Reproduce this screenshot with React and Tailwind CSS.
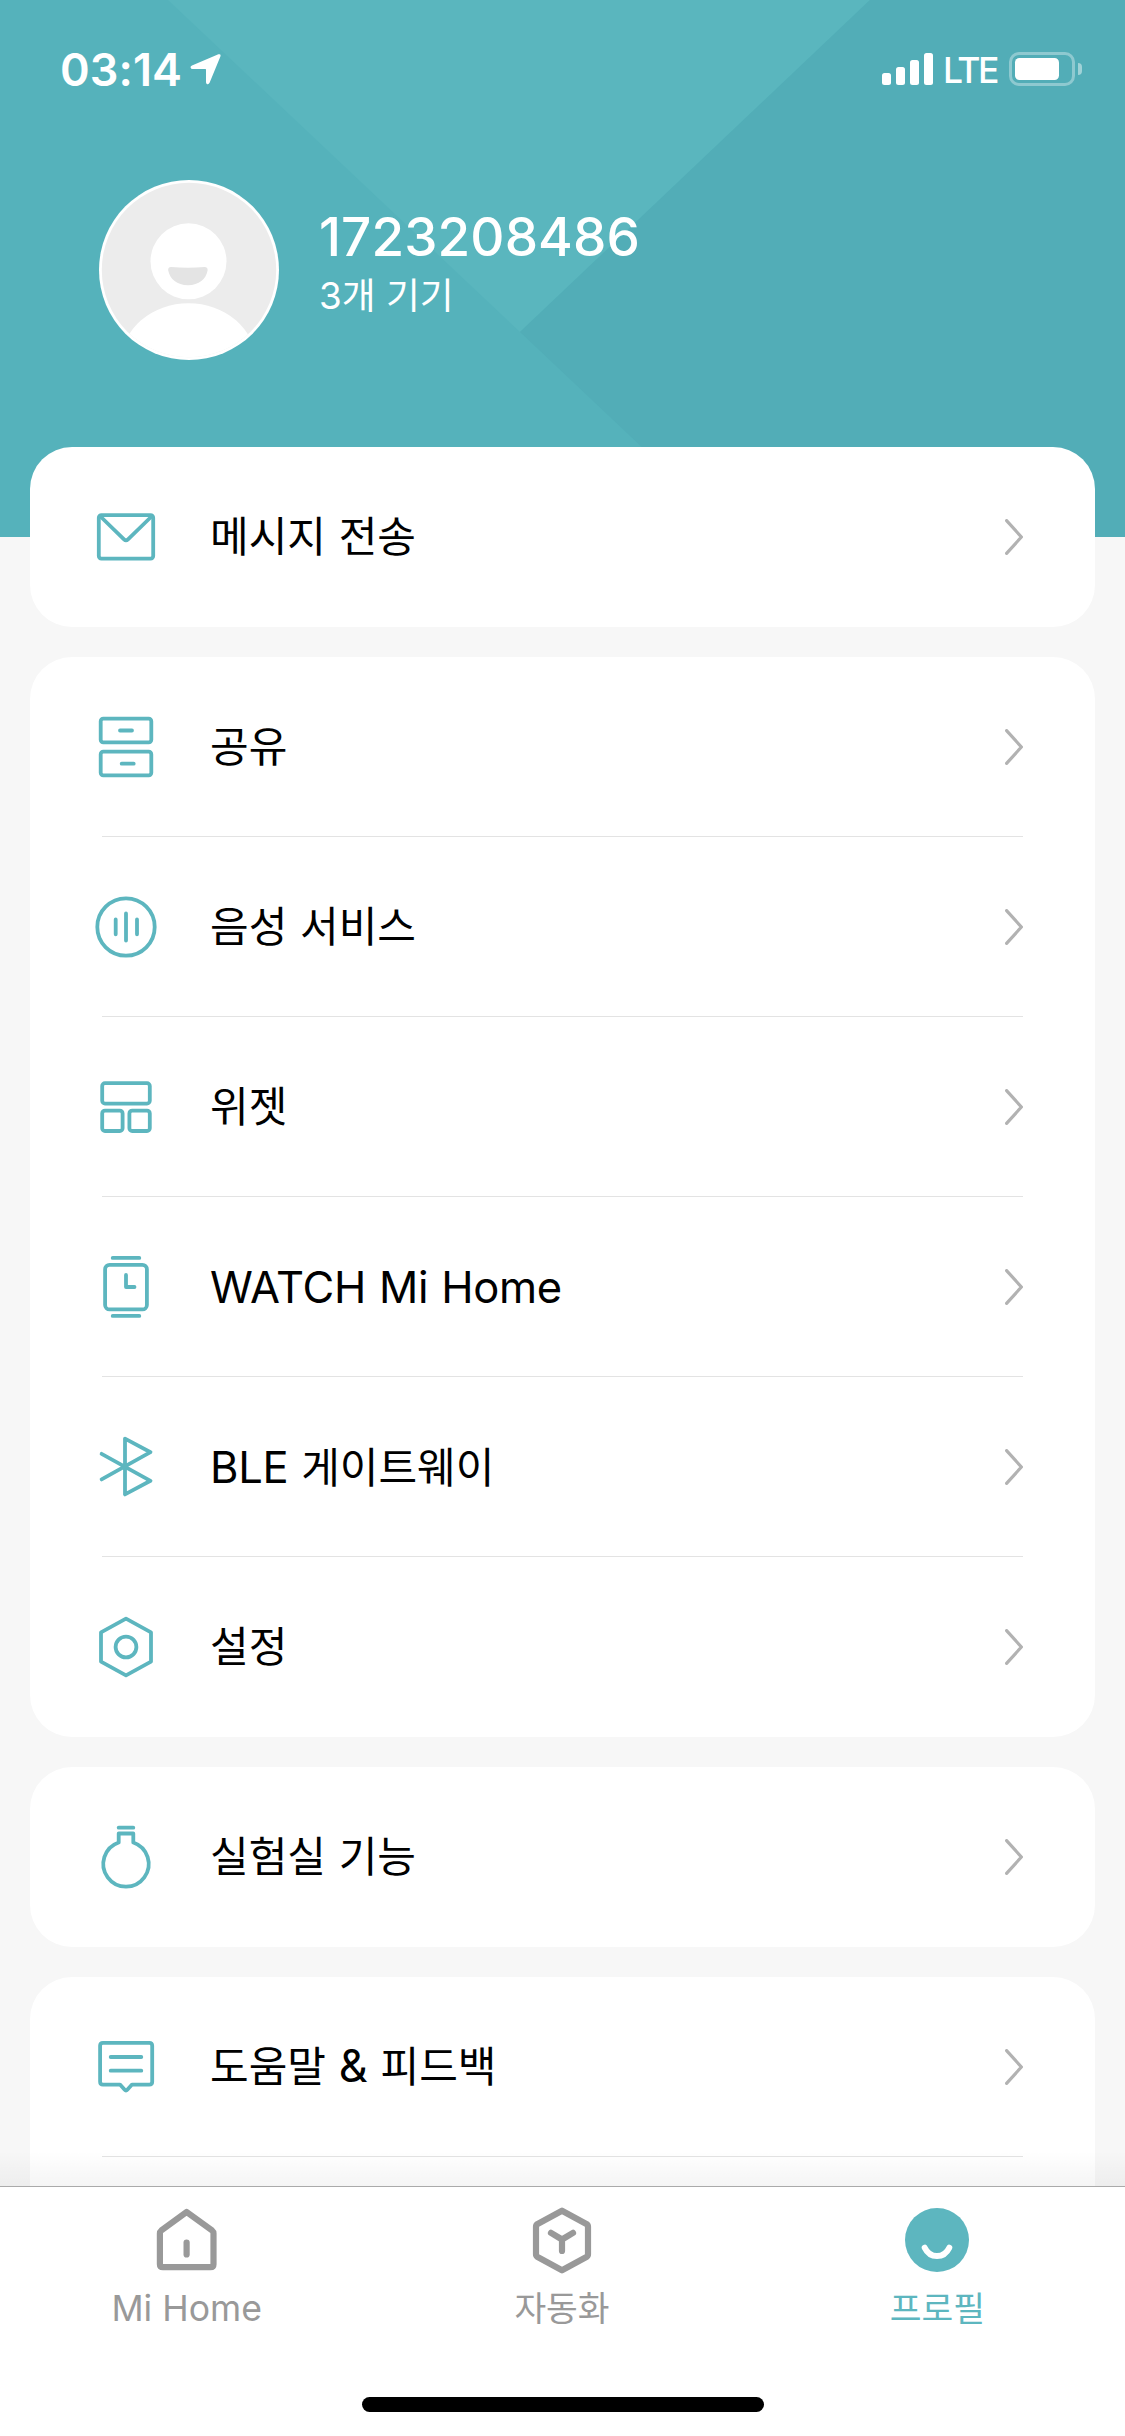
const icons = {
    mail: (
        <>
            <rect x="17.8" y="23.1" width="54.4" height="43.6" rx="2.6"/>
            <path d="M19.5 24.5L43 47.4Q45 49.3 47 47.4L70.5 24.5"/>
        </>
    ),
    share: (
        <>
            <rect x="19.7" y="16.7" width="50.6" height="23.6" rx="2.6"/>
            <rect x="19.7" y="49.7" width="50.6" height="23.6" rx="2.6"/>
            <path d="M39 28.5H51M40.7 61.7H52.7"/>
        </>
    ),
    voice: (
        <>
            <circle cx="45" cy="45" r="28.7"/>
            <path d="M34.7 37.5V52.3M45 31.5V58.5M56 37.5V52.3"/>
        </>
    ),
    widget: (
        <>
            <rect x="21.2" y="21.2" width="47.6" height="20.4" rx="2.8"/>
            <rect x="21.2" y="48.6" width="20.4" height="20.4" rx="2.8"/>
            <rect x="48.4" y="48.6" width="20.4" height="20.4" rx="2.8"/>
        </>
    ),
    watch: (
        <>
            <rect x="24.1" y="22.8" width="41.8" height="44.6" rx="4.5"/>
            <path d="M31.7 15.9H58.3M31.7 73.9H58.3M45 33V45H53.5"/>
        </>
    ),
    bluetooth: <path d="M20.6 31.8L69.5 58.8L44 72.4V16.6L69.5 30.2L20.6 57.4"/>,
    settings: (
        <>
            <path d="M45 16.7L70 30.4V59.6L45 73.3L20 59.6V30.4Z"/>
            <circle cx="45" cy="45" r="10.4"/>
        </>
    ),
    lab: (
        <>
            <path d="M37.7 15.7H52.3"/>
            <path d="M37.7 30.5V21.5H52.3V30.5A22.7 22.7 0 1 1 37.7 30.5Z"/>
        </>
    ),
    feedback: (
        <>
            <path d="M22 20.8H68.3Q71.2 20.8 71.2 23.7V59.7Q71.2 62.6 68.3 62.6H51L46.3 67.8Q45 69.3 43.7 67.8L39 62.6H22Q19.1 62.6 19.1 59.7V23.7Q19.1 20.8 22 20.8Z"/>
            <path d="M29.7 35H60.3M29.7 48.7H60.3"/>
        </>
    ),
};

const groups = [
    [{icon: 'mail', label: '메시지 전송'}],
    [
        {icon: 'share', label: '공유'},
        {icon: 'voice', label: '음성 서비스'},
        {icon: 'widget', label: '위젯'},
        {icon: 'watch', latin: 'WATCH Mi Home'},
        {icon: 'bluetooth', latin: 'BLE', label: ' 게이트웨이'},
        {icon: 'settings', label: '설정'},
    ],
    [{icon: 'lab', label: '실험실 기능'}],
];

function Row({item, divider}) {
    return (
        <div className="flex h-[180px] items-center pl-[51px] pr-[72px] relative">
            <svg
                className="size-[90px] shrink-0"
                viewBox="0 0 90 90"
                fill="none"
                stroke="#5db6bf"
                strokeWidth="3.8"
                strokeLinecap="round"
                strokeLinejoin="round"
            >
                {icons[item.icon]}
            </svg>
            <div className="ml-[39px] flex-1 whitespace-pre text-[42px] leading-[60px] text-black [word-spacing:1px]">
                {item.latin && <span className="text-[43.5px] tracking-[-0.3px]">{item.latin}</span>}
                {item.label}
            </div>
            <svg className="h-9 w-[18px]" viewBox="0 0 18 36" fill="none" stroke="#b2b2b2" strokeWidth="3.2" strokeLinecap="round" strokeLinejoin="round">
                <path d="M1.6 1.6L16.4 18L1.6 34.4"/>
            </svg>
            {divider && <div className="absolute bottom-0 left-[72px] right-[72px] h-px bg-[#e3e3e3]"/>}
        </div>
    );
}

function StatusBar() {
    return (
        <div className="flex h-[138px] items-center justify-between pl-[60px] pr-[43px] text-white">
            <div className="flex items-center">
                <span className="text-[45px] font-semibold leading-none tracking-[0.1px]">03:14</span>
                <svg className="ml-2 size-[31px]" viewBox="0 0 31 31" fill="currentColor">
                    <path d="M28.4 .3Q31.2 -.5 30.4 2.4L19.6 28.8Q18.7 30.6 17.3 30.2Q16 29.8 16 28.2V15.6Q16 15 15.4 15H2.6Q.9 15 .6 13.5Q.3 12.2 2 11.4Z"/>
                </svg>
            </div>
            <div className="flex items-center">
                <div className="flex h-8 items-end gap-[5px]">
                    <div className="h-3 w-[9px] rounded-[2.5px] bg-white"/>
                    <div className="h-[18px] w-[9px] rounded-[2.5px] bg-white"/>
                    <div className="h-[25px] w-[9px] rounded-[2.5px] bg-white"/>
                    <div className="h-8 w-[9px] rounded-[2.5px] bg-white"/>
                </div>
                <span className="ml-[10px] w-[66px] pt-[3px] text-[35.5px] font-medium leading-none tracking-[-2.4px]">LTE</span>
                <div className="h-[34px] w-[66px] rounded-[10px] border-3 border-white/35 p-[3px]">
                    <div className="h-[22px] w-11 rounded-[4.5px] bg-white"/>
                </div>
                <div className="ml-[3px] h-3 w-1 rounded-r-full bg-white/45"/>
            </div>
        </div>
    );
}

function Avatar() {
    return (
        <div className="size-[180px] overflow-hidden rounded-full bg-white">
            <svg viewBox="0 0 180 180">
                <clipPath id="face">
                    <circle cx="90" cy="90" r="87.2"/>
                </clipPath>
                <g clipPath="url(#face)">
                    <rect width="180" height="180" fill="#ececec"/>
                    <circle cx="89.5" cy="81.3" r="38" fill="#fff"/>
                    <path d="M72 87Q89 88.6 105.6 87Q109 87.2 108.6 90.5C107 99 100 105.2 89 105.2S71 99 69.2 90.5Q68.8 87 72 87Z" fill="#e4e4e4"/>
                    <ellipse cx="89.5" cy="181" rx="67" ry="57.7" fill="#fff"/>
                </g>
            </svg>
        </div>
    );
}

const tabs = [
    {
        label: 'Mi Home',
        style: 'text-[#999999] text-[35.6px]',
        icon: (
            <g fill="none" stroke="currentColor" strokeWidth="6.2" strokeLinecap="round" strokeLinejoin="round">
                <path d="M35.6 8L61.2 26.6Q62.5 27.6 62.5 29.5V60.2Q62.5 63.2 59.5 63.2H11.9Q8.9 63.2 8.9 60.2V29.5Q8.9 27.6 10.2 26.6Z"/>
                <path d="M35.6 38.7V50.5"/>
            </g>
        ),
    },
    {
        label: '자동화',
        style: 'text-[#999999] text-[34.5px]',
        icon: (
            <g fill="none" stroke="currentColor" strokeWidth="6.2" strokeLinecap="round" strokeLinejoin="round">
                <path d="M36 6.7L60.4 20Q62 21 62 22.8V50.2Q62 52 60.4 53L36 66.3L11.6 53Q10 52 10 50.2V22.8Q10 21 11.6 20Z"/>
                <path d="M25 28.8L36 35.5L47 28.8M36 35.5V47"/>
            </g>
        ),
    },
    {
        label: '프로필',
        style: 'text-[#5db6bf] text-[34.5px]',
        icon: (
            <>
                <circle cx="36" cy="36" r="32" fill="currentColor"/>
                <path d="M23.7 43.7C29 54.8 43 54.8 48.3 43.7" fill="none" stroke="#fff" strokeWidth="6" strokeLinecap="round"/>
            </>
        ),
    },
];

function TabBar() {
    return (
        <div className="relative flex h-[250px] shrink-0 flex-col border-t border-[#aaaaaa] bg-white">
            <div className="absolute inset-x-0 -top-9 h-[35px] bg-linear-to-t from-black/4 to-transparent"/>
            <div className="-ml-px grid grid-cols-3 pt-[17px]">
                {tabs.map(tab => (
                    <div key={tab.label} className={`flex flex-col items-center ${tab.style}`}>
                        <svg className="size-[72px]" viewBox="0 0 72 72">
                            {tab.icon}
                        </svg>
                        <span className="mt-2 leading-[50px]">{tab.label}</span>
                    </div>
                ))}
            </div>
            <div className="mx-auto mb-6 mt-auto h-[15px] w-[402px] rounded-full bg-black"/>
        </div>
    );
}

export default function App() {
    return (
        <div className="flex h-[2436px] w-[1125px] flex-col overflow-hidden bg-[#f7f7f7] font-['Inter','Noto_Sans_CJK_KR',sans-serif]">
            <div className="relative h-[537px] shrink-0 bg-[#55b2bb]">
                <svg className="absolute inset-0" width="1125" height="537">
                    <path d="M168 0H870L520 332Z" fill="#5ab6be"/>
                    <path d="M870 0H1125V537H737L520 332Z" fill="#52adb7"/>
                </svg>
                <div className="relative">
                    <StatusBar/>
                    <div className="mt-[42px] flex pl-[99px] text-white">
                        <Avatar/>
                        <div className="ml-10 pt-[26px]">
                            <div className="text-[53px] font-medium leading-[62px] tracking-[0.1px]">1723208486</div>
                            <div className="mt-px text-[36.8px] leading-[54px]">3개 기기</div>
                        </div>
                    </div>
                </div>
            </div>

            <div className="relative -mt-[90px] flex min-h-0 flex-1 flex-col gap-[30px] overflow-hidden px-[30px]">
                {groups.map((group, i) => (
                    <div key={i} className="shrink-0 rounded-[42px] bg-white">
                        {group.map((item, j) => (
                            <Row key={item.icon} item={item} divider={j < group.length - 1}/>
                        ))}
                    </div>
                ))}
                <div className="h-[360px] shrink-0 rounded-[42px] bg-white">
                    <Row item={{icon: 'feedback', label: <>도움말 <span className="text-[45px] leading-none">&amp;</span> 피드백</>}} divider/>
                </div>
            </div>

            <TabBar/>
        </div>
    );
}
